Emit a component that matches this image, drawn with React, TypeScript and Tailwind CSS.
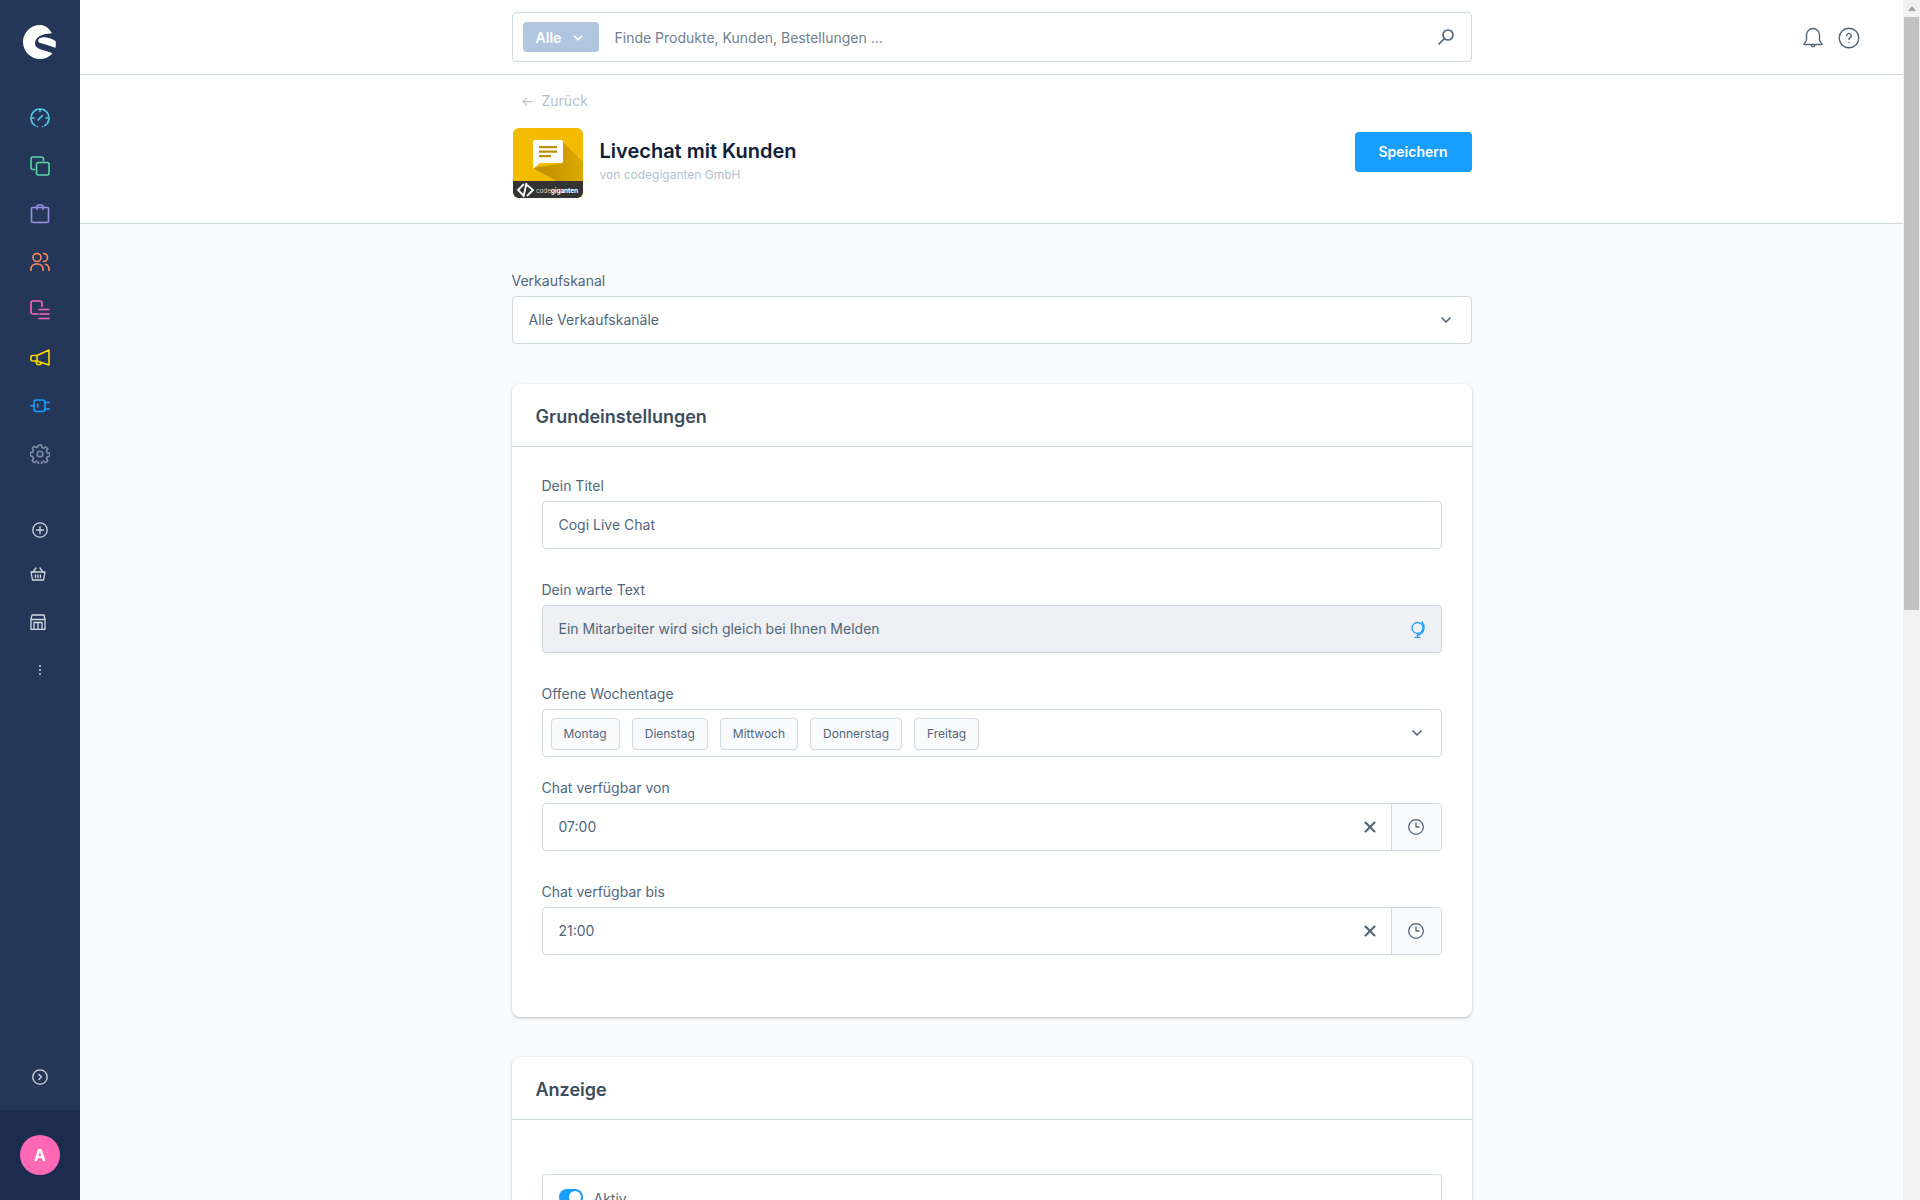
import React from "react";
import { ChevronDown, X } from "lucide-react";

const navIcons = [
  {
    color: "#57c5e8",
    paths: (
      <>
        <path d="M5.2 17.6A9 9 0 1 1 14.8 17.6" />
        <path d="M7.5 18.8h.01M12.5 18.8h.01" />
        <path d="M8 12l4.4-4.4" />
        <path d="M10 1.5v2M2 10h2M16 10h2" />
      </>
    ),
  },
  {
    color: "#57d9a3",
    paths: (
      <>
        <path d="M4.5 13.5H3a2 2 0 0 1-2-2V3a2 2 0 0 1 2-2h8.5a2 2 0 0 1 2 2v1.5" />
        <rect x="6.5" y="6.5" width="12.5" height="12.5" rx="2" />
      </>
    ),
  },
  {
    color: "#9a8fe6",
    paths: (
      <>
        <path d="M2.5 3.500h15a1 1 0 0 1 1 1V17a1.500 1.500 0 0 1-1.500 1.500H3A1.500 1.500 0 0 1 1.500 17V4.500a1 1 0 0 1 1-1z" />
        <path d="M7 5.500V2.500a1.500 1.500 0 0 1 1.500-1.500h3a1.500 1.500 0 0 1 1.500 1.500v3" />
      </>
    ),
  },
  {
    color: "#ff8a5c",
    paths: (
      <>
        <circle cx="7" cy="5.500" r="4" />
        <path d="M1 18.500V17a5 5 0 0 1 5-5h2a5 5 0 0 1 5 5v1.500" />
        <path d="M13.500 1.500a4 4 0 0 1 0 8" />
        <path d="M15.500 12.300A5 5 0 0 1 19 17v1.500" />
      </>
    ),
  },
  {
    color: "#ff68b4",
    paths: (
      <>
        <path d="M8 14H3a2 2 0 0 1-2-2V3a2 2 0 0 1 2-2h7a2 2 0 0 1 2 2v3.500" />
        <path d="M9 9.500h10M10 14h9M9 18.500h10" />
      </>
    ),
  },
  {
    color: "#ffd700",
    paths: (
      <>
        <path d="M19 2v15L7 13H2.500a1.500 1.500 0 0 1-1.500-1.500V9a1.500 1.500 0 0 1 1.500-1.500H7z" />
        <path d="M7 7.500V13" />
        <path d="M6 13.500l.6 2a1.500 1.500 0 0 0 1.900 1h1.500a1.200 1.200 0 0 0 .6-2" />
      </>
    ),
  },
  {
    color: "#189eff",
    paths: (
      <>
        <rect x="4" y="4" width="11" height="11.500" rx="2.500" />
        <path d="M0.500 9.800H4M15 6.500h4.500M15 13h4.500M7.800 8.500v2.500" />
      </>
    ),
  },
  {
    color: "#7d8ea1",
    paths: (
      <>
        <circle cx="10" cy="10" r="2.800" />
        <path d="M8.600 1h2.800l.5 2.500 1.700.8 2.200-1.300 2 2-1.300 2.200.8 1.700 2.500.5v2.800l-2.500.5-.8 1.700 1.300 2.200-2 2-2.200-1.300-1.700.8-.5 2.400H8.600l-.5-2.400-1.700-.8-2.200 1.300-2-2 1.300-2.200-.8-1.700L0.200 11.400V8.600l2.500-.5.8-1.700L2.200 4.200l2-2 2.200 1.300 1.700-.8z" />
      </>
    ),
  },
];

const NavIcon: React.FC<{ color: string; children: React.ReactNode }> = ({ color, children }) => (
  <svg width="20" height="20" viewBox="0 0 20 20" fill="none" stroke={color} strokeWidth="1.600" strokeLinecap="round" strokeLinejoin="round">
    {children}
  </svg>
);

const SmallIcon: React.FC<{ children: React.ReactNode; className?: string }> = ({ children, className }) => (
  <svg className={className} width="16" height="16" viewBox="0 0 16 16" fill="none" stroke="#d1d9e0" strokeWidth="1.300" strokeLinecap="round" strokeLinejoin="round">
    {children}
  </svg>
);

const ClockIcon = () => (
  <svg width="16" height="16" viewBox="0 0 16 16" fill="none" stroke="#52667a" strokeWidth="1.300" strokeLinecap="round" strokeLinejoin="round">
    <circle cx="8" cy="8" r="7.300" />
    <path d="M8 4.300V8h3" />
  </svg>
);

const ShopwareLogo = () => (
  <svg width="36" height="36" viewBox="0 0 36 36">
    <path
      fill="#fff"
      d="M18 1C8.600 1 1 8.600 1 18s7.600 17 17 17c4.700 0 9-1.900 12-5 .4-.4.200-.9-.3-1.100-3.500-1.500-7.600-2.400-11.500-3.700-3-1-5.200-2.800-5.200-6 0-5.400 6.500-9.600 15.600-9.700 1 0 1.300-.6.700-1.300C26.200 3 22.300 1 18 1z"
    />
    <path
      fill="#fff"
      d="M21 13.300c-3 .3-4.800 1.400-4.800 3.400 0 1.400 1.300 2.100 4 2.900 3 .9 9.500 2.800 13.200 4.500.3-1.500.500-3.800.500-5.300 0-1.100-.3-1.800-1.200-2.300-3.300-1.900-7.700-3.600-11.700-3.200z"
    />
  </svg>
);

const AppIcon = () => (
  <svg width="70" height="70" viewBox="0 0 70 70" className="rounded-md">
    <defs>
      <linearGradient id="bubble-shadow" x1="0" y1="0" x2="1" y2="0">
        <stop offset="0" stopColor="#bb8f00" />
        <stop offset="1" stopColor="#dca700" />
      </linearGradient>
    </defs>
    <rect width="70" height="70" fill="#f4bc00" />
    <path d="M50 14L70 34V53H43L20 40 50 35z" fill="url(#bubble-shadow)" />
    <path d="M22 12h26a2 2 0 0 1 2 2v19a2 2 0 0 1-2 2H27l-7 6V14a2 2 0 0 1 2-2z" fill="#fff" />
    <path d="M26 18h18v2.200H26zM26 22.500h18v2.200H26zM26 27h12v2.200H26z" fill="#bd9000" />
    <rect y="53" width="70" height="17" fill="#333333" />
    <path d="M11 56l-6 6 6 6M14 57l6 5-6 6M13.500 55l-3 14" fill="none" stroke="#fff" strokeWidth="1.800" />
    <text x="23" y="64.500" fontSize="6.500" textLength="42" fill="#d0d0d0" fontFamily="Inter, sans-serif">
      code<tspan fontWeight="700" fill="#fff">giganten</tspan>
    </text>
  </svg>
);

const days = ["Montag", "Dienstag", "Mittwoch", "Donnerstag", "Freitag"];

const FieldLabel: React.FC<{ children: React.ReactNode }> = ({ children }) => (
  <label className="block h-6 text-sm leading-[18px] text-[#52667a]">{children}</label>
);

const TimeField: React.FC<{ label: string; value: string; className?: string }> = ({ label, value, className }) => (
  <div className={className}>
    <FieldLabel>{label}</FieldLabel>
    <div className="flex h-12 items-stretch rounded border border-[#d1d9e0] bg-white text-sm text-[#52667a]">
      <span className="flex flex-1 items-center pl-4">{value}</span>
      <span className="flex w-[44px] items-center justify-end pr-[12px]">
        <X size={18} strokeWidth={2.800} className="text-[#52667a]" />
      </span>
      <span className="flex w-[50px] items-center justify-center rounded-r border-l border-[#d1d9e0] bg-[#f9fafb]">
        <ClockIcon />
      </span>
    </div>
  </div>
);

export default function App() {
  return (
    <div className="flex h-screen overflow-hidden bg-[#f9fafb] font-['Inter',sans-serif]">
      <aside className="flex w-20 shrink-0 flex-col bg-[#243758]">
        <div className="mb-[10px] flex h-[84px] items-center justify-center">
          <ShopwareLogo />
        </div>
        <nav className="flex flex-col items-center">
          {navIcons.map((icon, i) => (
            <div key={i} className="flex h-12 w-full items-center justify-center">
              <NavIcon color={icon.color}>{icon.paths}</NavIcon>
            </div>
          ))}
        </nav>
        <div className="mt-[44px] flex flex-col items-center">
          <SmallIcon className="mb-[28px]">
            <circle cx="8" cy="8" r="7.200" />
            <path d="M8 4.500v7M4.500 8h7" />
          </SmallIcon>
          <SmallIcon className="mb-8 -ml-1">
            <path d="M1 6h14l-1.500 8h-11z" />
            <path d="M3 6l3-4M13 6l-3-4M5.500 9v2.500M8 9v2.500M10.500 9v2.500" />
          </SmallIcon>
          <SmallIcon className="mb-8 -ml-1">
            <path d="M2 1h12l1 4.500v10H1v-10z" />
            <path d="M1 5.500h14M4 15.500V8.500h8v7M8 8.500v7" />
          </SmallIcon>
          <div className="flex h-4 flex-col items-center justify-center gap-[2px]">
            <span className="h-[2px] w-[2px] rounded-full bg-[#d1d9e0]" />
            <span className="h-[2px] w-[2px] rounded-full bg-[#d1d9e0]" />
            <span className="h-[2px] w-[2px] rounded-full bg-[#d1d9e0]" />
          </div>
        </div>
        <div className="mt-auto flex h-[41px] items-start justify-center">
          <SmallIcon>
            <circle cx="8" cy="8" r="7.200" />
            <path d="M6.800 5.500L9.500 8l-2.700 2.500" />
          </SmallIcon>
        </div>
        <div className="flex h-[90px] items-center justify-center bg-[#1b2c4e]">
          <div className="flex h-10 w-10 items-center justify-center rounded-full bg-[#ff68b4] text-base font-bold text-white">
            A
          </div>
        </div>
      </aside>

      <main className="flex min-w-0 flex-1 flex-col">
        <div className="relative h-[75px] shrink-0 border-b border-[#d1d9e0] bg-white">
          <div className="mx-auto flex h-full w-[960px] items-start pt-3">
            <div className="flex h-[50px] w-full items-center rounded border border-[#d1d9e0] bg-white pl-[10px] pr-4">
              <div className="flex h-[30px] w-[76px] items-center justify-center gap-[10px] rounded bg-[#afc6de] pt-px text-sm font-semibold text-white">
                Alle
                <ChevronDown size={14} strokeWidth={3} />
              </div>
              <span className="ml-4 flex-1 pt-[2px] text-sm text-[#6f7f8f]">Finde Produkte, Kunden, Bestellungen ...</span>
              <svg width="18" height="18" viewBox="0 0 18 18" fill="none" stroke="#52667a" strokeWidth="1.700" strokeLinecap="round">
                <circle cx="11" cy="7" r="5" />
                <path d="M7.300 10.700L2 16" />
              </svg>
            </div>
          </div>
          <div className="absolute right-[43px] top-[1px] flex h-[74px] items-center gap-[14px]">
            <svg width="22" height="22" viewBox="0 0 22 22" fill="none" stroke="#52667a" strokeWidth="1.400" strokeLinecap="round" strokeLinejoin="round">
              <path d="M11 1.500a6.500 6.500 0 0 0-6.500 6.500v5c0 2-2.500 2.500-2.500 4.500h18c0-2-2.500-2.500-2.500-4.500V8A6.500 6.500 0 0 0 11 1.500z" />
              <path d="M9.300 18a1.700 1.700 0 0 0 3.400 0" />
            </svg>
            <svg width="22" height="22" viewBox="0 0 22 22" fill="none" stroke="#52667a" strokeWidth="1.400" strokeLinecap="round">
              <circle cx="11" cy="11" r="9.800" />
              <path d="M8.700 8.700a2.300 2.300 0 1 1 3.500 2c-.8.500-1.200.9-1.200 1.800M11 15.500h.01" />
            </svg>
          </div>
        </div>

        <div className="h-[149px] shrink-0 border-b border-[#d1d9e0] bg-white">
          <div className="mx-auto w-[960px]">
            <div className="flex h-[53px] items-center gap-[7px] pl-[9px] pb-[1px] text-sm text-[#b5c0cc]">
              <span className="w-[14px] text-center">←</span>
              <span>Zurück</span>
            </div>
            <div className="flex items-center">
              <div className="ml-[1px] h-[70px]">
                <AppIcon />
              </div>
              <div className="mb-[5px] ml-[17px] flex-1">
                <h1 className="text-xl font-semibold leading-6 text-[#0f2038]">Livechat mit Kunden</h1>
                <p className="mt-[4px] text-xs text-[#b3bfcc]">von codegiganten GmbH</p>
              </div>
              <button className="mb-[23px] h-10 w-[117px] rounded bg-[#189eff] text-sm font-semibold text-white">Speichern</button>
            </div>
          </div>
        </div>

        <div className="mx-auto w-[960px] pt-[48px]">
          <FieldLabel>Verkaufskanal</FieldLabel>
          <div className="flex h-12 items-center justify-between rounded border border-[#d1d9e0] bg-white pl-4 pr-[17px] text-sm text-[#52667a]">
            Alle Verkaufskanäle
            <ChevronDown size={16} strokeWidth={2.500} />
          </div>

          <section className="mt-10 h-[633px] rounded-lg bg-white shadow-[0_1px_3px_rgba(0,0,0,0.25)]">
            <h2 className="flex h-[63px] items-center border-b border-[#d1d9e0] pl-6 pt-1 text-lg font-semibold text-[#3d4c5c]">Grundeinstellungen</h2>
            <div className="px-[30px] pt-[30px]">
              <FieldLabel>Dein Titel</FieldLabel>
              <div className="flex h-12 items-center rounded border border-[#d1d9e0] bg-white pl-4 text-sm text-[#52667a]">Cogi Live Chat</div>

              <div className="mt-8">
                <FieldLabel>Dein warte Text</FieldLabel>
                <div className="flex h-12 items-center justify-between rounded border border-[#d1d9e0] bg-[#eef0f3] pl-4 pr-[15px] text-sm text-[#52667a]">
                  Ein Mitarbeiter wird sich gleich bei Ihnen Melden
                  <svg width="16" height="17" viewBox="0 0 16 17" fill="none" stroke="#189eff" strokeWidth="1.300" strokeLinecap="round">
                    <circle cx="7.500" cy="7" r="5.500" />
                    <path d="M12 1a8 8 0 0 1 2 6 7 7 0 0 1-6.500 7M7.500 14v2.300M5 16.300h5" />
                  </svg>
                </div>
              </div>

              <div className="mt-8">
                <FieldLabel>Offene Wochentage</FieldLabel>
                <div className="flex h-12 items-center rounded border border-[#d1d9e0] bg-white pl-[8px] pr-4">
                  <div className="flex flex-1 gap-3 pt-px">
                    {days.map((day) => (
                      <span key={day} className="flex h-8 items-center rounded-sm border border-[#d1d9e0] bg-[#f9fafb] px-3 text-xs text-[#52667a]">
                        {day}
                      </span>
                    ))}
                  </div>
                  <ChevronDown size={16} strokeWidth={2.500} className="text-[#52667a]" />
                </div>
              </div>

              <TimeField className="mt-[22px]" label="Chat verfügbar von" value="07:00" />
              <TimeField className="mt-8" label="Chat verfügbar bis" value="21:00" />
            </div>
          </section>

          <section className="mt-10 rounded-t-lg bg-white shadow-[0_1px_3px_rgba(0,0,0,0.25)]">
            <h2 className="flex h-[63px] items-center border-b border-[#d1d9e0] pl-6 pt-1 text-lg font-semibold text-[#3d4c5c]">Anzeige</h2>
            <div className="px-[30px] pt-[54px]">
              <div className="flex h-24 items-start gap-[11px] rounded border border-[#d1d9e0] px-4 pt-[14px] text-sm text-[#52667a]">
                <span className="relative h-4 w-6 rounded-full bg-[#189eff]">
                  <span className="absolute right-[2px] top-[2px] h-3 w-3 rounded-full bg-white" />
                </span>
                <span className="pt-[2px] leading-4">Aktiv</span>
              </div>
            </div>
          </section>
        </div>
      </main>

      <div className="flex w-[17px] shrink-0 flex-col bg-[#f1f1f1]">
        <div className="flex h-[17px] items-center justify-center">
          <span className="h-0 w-0 border-x-[4px] border-b-[5px] border-x-transparent border-b-[#a3a3a3]" />
        </div>
        <div className="mx-[1px] h-[593px] bg-[#c1c1c1]" />
      </div>
    </div>
  );
}
